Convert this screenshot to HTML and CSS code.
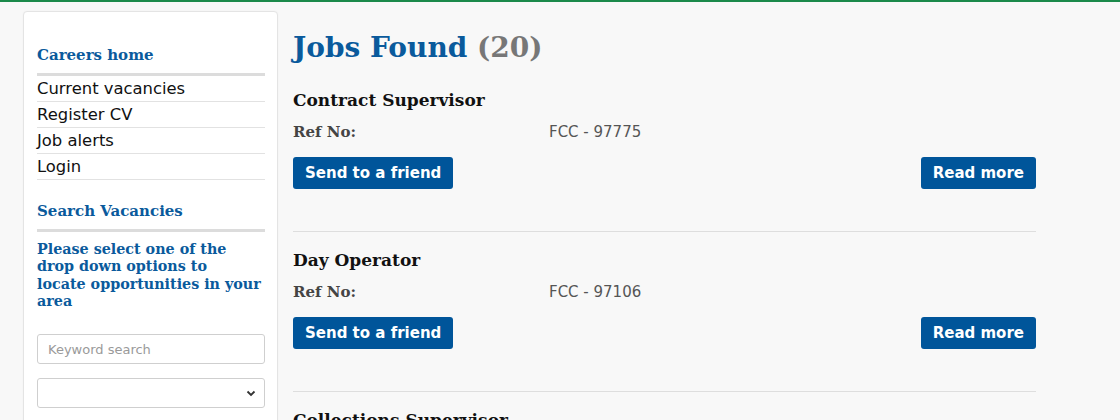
FILE: index.html
```html
<!DOCTYPE html>
<html lang="en">
<head>
<meta charset="utf-8">
<title>Jobs Found</title>
<link rel="stylesheet" href="styles.css">
</head>
<body>
<div class="topbar"></div>
<div class="page">
  <aside class="sidebar">
    <h3 class="side-title">Careers home</h3>
    <ul class="side-menu">
      <li><a href="#">Current vacancies</a></li>
      <li><a href="#">Register CV</a></li>
      <li><a href="#">Job alerts</a></li>
      <li><a href="#">Login</a></li>
    </ul>
    <h3 class="side-title second">Search Vacancies</h3>
    <p class="side-intro">Please select one of the drop down options to<br>locate opportunities in your area</p>
    <input class="field" type="text" placeholder="Keyword search">
    <div class="select-wrap">
      <select class="select"><option></option></select>
      <svg class="chevron" width="10" height="7" viewBox="0 0 10 7"><path d="M1.5 1.5 L5 5 L8.5 1.5" fill="none" stroke="#333" stroke-width="1.8"/></svg>
    </div>
  </aside>
  <main class="main">
    <h1 class="title">Jobs Found <span class="count">(20)</span></h1>
    <div class="job">
      <h2 class="job-title">Contract Supervisor</h2>
      <div class="ref"><span class="ref-label">Ref No:</span><span class="ref-value">FCC - 97775</span></div>
      <div class="actions"><a class="btn" href="#">Send to a friend</a><a class="btn" href="#">Read more</a></div>
    </div>
    <div class="job">
      <h2 class="job-title">Day Operator</h2>
      <div class="ref"><span class="ref-label">Ref No:</span><span class="ref-value">FCC - 97106</span></div>
      <div class="actions"><a class="btn" href="#">Send to a friend</a><a class="btn" href="#">Read more</a></div>
    </div>
    <div class="job">
      <h2 class="job-title">Collections Supervisor</h2>
      <div class="ref"><span class="ref-label">Ref No:</span><span class="ref-value">FCC - 97012</span></div>
      <div class="actions"><a class="btn" href="#">Send to a friend</a><a class="btn" href="#">Read more</a></div>
    </div>
  </main>
</div>
</body>
</html>
```
FILE: styles.css
```css
html, body {
  margin: 0;
  padding: 0;
  background: #f8f8f8;
  font-family: "DejaVu Sans", Verdana, sans-serif;
  color: #222;
  overflow: hidden;
}
.topbar {
  height: 2px;
  background: #1b8a4b;
}
.page {
  display: flex;
  align-items: flex-start;
  gap: 15px;
  padding: 9px 0 0 23px;
}
.sidebar {
  width: 228px;
  flex: none;
  background: #fff;
  border: 1px solid #e4e4e4;
  border-radius: 4px;
  box-shadow: 0 0 2px rgba(0,0,0,0.04);
  padding: 33px 12px 60px 13px;
}
.side-title {
  margin: 0;
  font-family: "DejaVu Serif", serif;
  font-weight: bold;
  font-size: 15px;
  line-height: 20px;
  color: #0a5a9c;
  padding-bottom: 8px;
  border-bottom: 3px solid #dcdcdc;
}
.side-title.second {
  margin-top: 21px;
}
.side-menu {
  list-style: none;
  margin: 0;
  padding: 0;
}
.side-menu li {
  border-bottom: 1px solid #e2e2e2;
  line-height: 25px;
  font-size: 16.4px;
}
.side-menu a {
  color: #111;
  text-decoration: none;
}
.side-intro {
  margin: 9px 0 24px;
  font-family: "DejaVu Serif", serif;
  font-weight: bold;
  font-size: 14.3px;
  line-height: 17.3px;
  color: #0a5a9c;
}
.field {
  display: block;
  box-sizing: border-box;
  width: 100%;
  height: 30px;
  margin: 0 0 14px;
  padding: 0 10px;
  border: 1px solid #cfcfcf;
  border-radius: 3px;
  background: #fff;
  font-family: "DejaVu Sans", sans-serif;
  font-size: 13px;
  color: #333;
}
.field::placeholder {
  color: #9a9a9a;
}
.select-wrap {
  box-sizing: border-box;
  height: 30px;
  display: flex;
  align-items: center;
  border: 1px solid #cfcfcf;
  border-radius: 3px;
  background: #fff;
  padding: 0 8px 0 0;
}
.select {
  flex: 1;
  height: 28px;
  border: 0;
  background: transparent;
  -webkit-appearance: none;
  appearance: none;
  outline: none;
}
.chevron {
  flex: none;
}
.main {
  width: 743px;
  flex: none;
}
.title {
  margin: 20px 0 7px;
  font-family: "DejaVu Serif", serif;
  font-weight: bold;
  font-size: 28px;
  line-height: 34px;
  color: #0a5a9c;
}
.count {
  color: #777;
}
.job {
  padding: 17px 0 42px;
  border-bottom: 1px solid #dedede;
}
.job-title {
  margin: 0;
  font-family: "DejaVu Serif", serif;
  font-weight: bold;
  font-size: 17px;
  line-height: 22px;
  color: #111;
}
.ref {
  display: grid;
  grid-template-columns: 256px 1fr;
  margin-top: 12px;
  font-size: 15px;
  line-height: 18px;
}
.ref-label {
  font-family: "DejaVu Serif", serif;
  font-weight: bold;
  color: #444;
}
.ref-value {
  color: #555;
}
.actions {
  display: flex;
  justify-content: space-between;
  margin-top: 16px;
}
.btn {
  display: block;
  background: #00559a;
  color: #fff;
  font-weight: bold;
  font-size: 15px;
  line-height: 18px;
  padding: 7px 12px;
  border-radius: 3px;
  text-decoration: none;
}
```
